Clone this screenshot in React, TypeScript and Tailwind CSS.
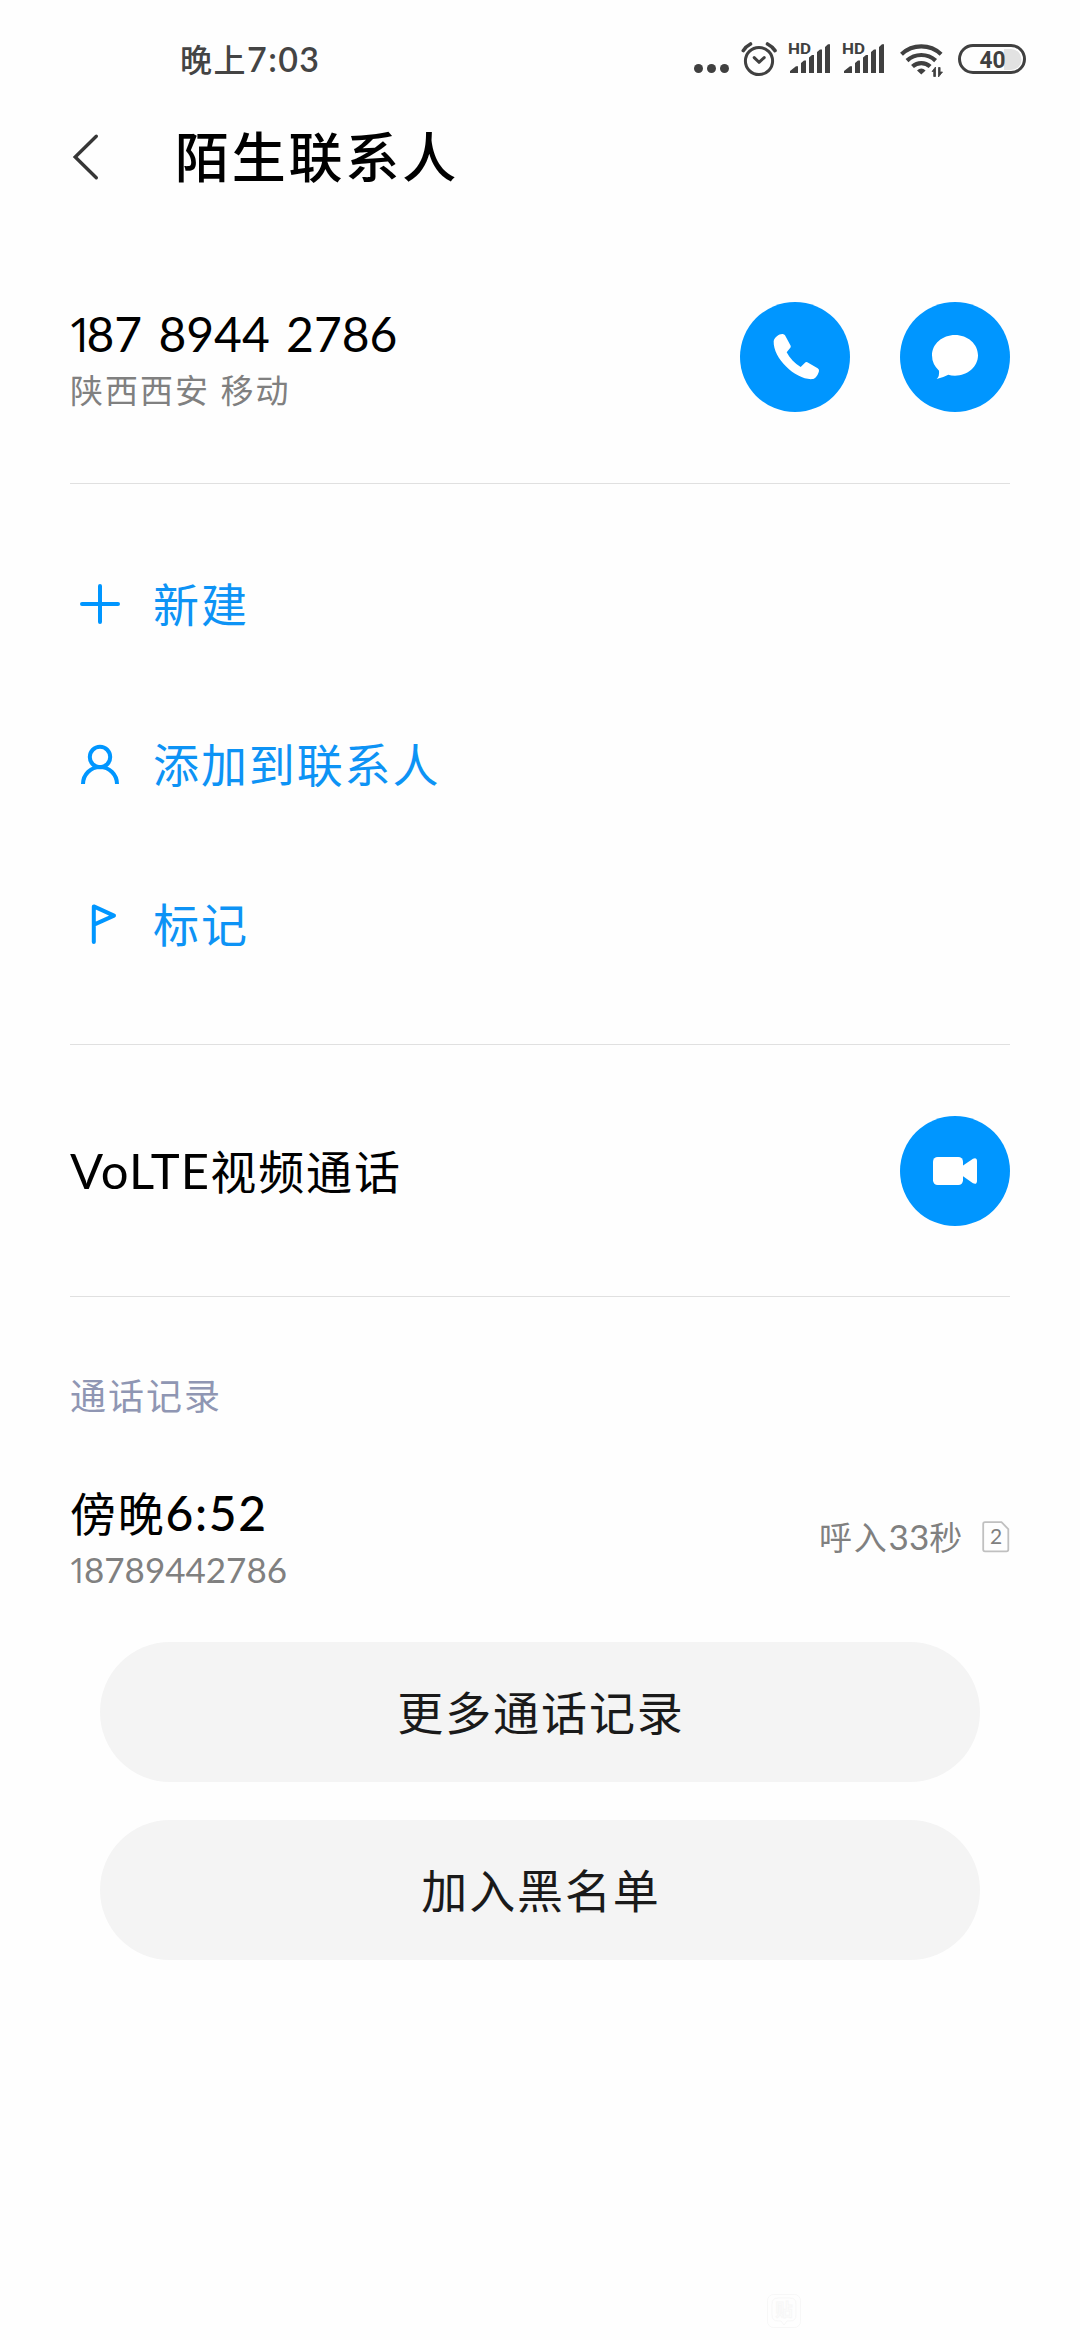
import type { ReactNode } from 'react';

const actions: { label: string; icon: ReactNode }[] = [
  { label: '新建', icon: <path d="M20 2v36M2 20h36" strokeLinecap="round" /> },
  {
    label: '添加到联系人',
    icon: (
      <>
        <circle cx="20" cy="13" r="10.2" />
        <path d="M3 40a17 17 0 0 1 34 0" />
      </>
    ),
  },
  {
    label: '标记',
    icon: <path d="M13.8 38V2.4L34 11.6 14 20.6" strokeLinecap="round" strokeLinejoin="round" />,
  },
];

export default function App() {
  return (
    <div className="flex h-[2340px] w-[1080px] flex-col overflow-hidden bg-[#fefefe] font-['Lato','Noto_Sans_CJK_SC',sans-serif] text-black whitespace-nowrap">
      <StatusBar />

      {/* Title bar */}
      <header className="flex h-[116px] items-center pl-[72px]">
        <svg className="mb-[3px] h-[48px] w-[28px]" viewBox="0 0 28 48" fill="none" stroke="#363636" strokeWidth="3.4" strokeLinecap="round">
          <path d="M24.3 3.3 3.2 24l21.1 20.7" />
        </svg>
        <h1 className="ml-[75px] text-[54px] leading-none font-medium tracking-[2.8px]">陌生联系人</h1>
      </header>

      <main className="flex flex-col px-[70px]">
        {/* Number */}
        <section className="flex h-[268px] items-center justify-between border-b border-[#e0e0e0] pt-[15px]">
          <div className="flex flex-col pt-[9px]">
            <span className="text-[48px] leading-[56px] [word-spacing:4px]">
              <span className="-ml-[3px] font-['Open_Sans'] tracking-[-8px]">1</span>87 8944 2786
            </span>
            <span className="text-[33px] leading-[56px] tracking-[2px] text-[#808080]">陕西西安 移动</span>
          </div>
          <div className="flex gap-[50px]">
            <RoundButton>
              <path d="M101 118C103 105 118 95 128 96Q133 97 135 100L152 131Q153 135 151 137L140 151C149 169 164 184 182 195L195 182Q198 179 202 181L233 199Q238 202 237 207C235 217 227 230 219 231C172 237 99 172 101 118Z" />
            </RoundButton>
            <RoundButton>
              <path d="M165 99C203 99 234 126 234 160S203 221 165 221Q153 221 145 218Q130 226 110 231Q119 222 117 206Q96 187 96 160C96 126 127 99 165 99Z" />
            </RoundButton>
          </div>
        </section>

        {/* Actions */}
        <section className="border-b border-[#e0e0e0] py-10">
          {actions.map(a => (
            <button key={a.label} className="flex h-40 w-full items-center pl-[10px] text-[#0d93f5]">
              <svg className="h-10 w-10" viewBox="0 0 40 40" fill="none" stroke="#0096ff" strokeWidth="4">
                {a.icon}
              </svg>
              <span className="ml-[33px] pt-[2px] text-[46px] leading-none tracking-[1.9px]">{a.label}</span>
            </button>
          ))}
        </section>

        {/* Video call */}
        <section className="flex h-[252px] items-center justify-between border-b border-[#e0e0e0]">
          <span className="text-[46px] leading-none tracking-[1.9px]">
            <span className="text-[49px] tracking-[1.2px]">VoLTE</span>视频通话
          </span>
          <RoundButton>
            <rect x="99" y="123" width="90" height="84" rx="14" />
            <path d="M187 150 219 128Q231 123 231 136V194Q231 207 219 202L187 179Z" />
          </RoundButton>
        </section>

        {/* Call log */}
        <h2 className="mt-[71px] text-[36px] leading-[56px] tracking-[2px] text-[#8f96b3]">通话记录</h2>
        <div className="mt-[55px] flex h-[120px] items-center justify-between">
          <div className="flex flex-col pt-[4px]">
            <span className="text-[46px] leading-[56px] tracking-[1.7px]">
              傍晚<span className="text-[48px] font-medium">6:52</span>
            </span>
            <span className="text-[35px] leading-[54px] text-[#808080]">
              <span className="-ml-[2px] font-['Open_Sans'] tracking-[-4px]">1</span>8789442786
            </span>
          </div>
          <div className="flex items-center pb-[5px] text-[#808080]">
            <span className="text-[33px] leading-none tracking-[1.8px]">
              呼入<span className="text-[35px] tracking-normal">33</span>秒
            </span>
            <svg className="ml-[18px] h-[32px] w-[28px]" viewBox="0 0 28 32" fill="none">
              <path d="M3 1.2H19.5L26.3 8V28.5Q26.3 30.3 24.5 30.3H3Q1.2 30.3 1.2 28.5V3Q1.2 1.2 3 1.2Z" stroke="#c0c0c0" strokeWidth="1.8" />
              <text x="14" y="23" textAnchor="middle" fontSize="21" fill="#808080" fontFamily="Lato, sans-serif">2</text>
            </svg>
          </div>
        </div>
      </main>

      <div className="mt-[43px] flex flex-col gap-[38px] px-[100px]">
        <PillButton>更多通话记录</PillButton>
        <PillButton>加入黑名单</PillButton>
      </div>

      {/* Faint app mark at the bottom edge */}
      <div className="mt-auto flex pb-[12px] pl-[767px]">
        <svg className="h-[34px] w-[34px]" viewBox="0 0 34 34" fill="none" stroke="#f7f7f7">
          <rect x="0.5" y="0.5" width="33" height="33" rx="6" />
          <path d="M11 4h12q6 0 6 6v11q0 6-6 6h-3l-3 4-3-4h-3q-6 0-6-6V10q0-6 6-6Z" />
          <text x="17" y="22" textAnchor="middle" fontSize="17" fontWeight="700" fill="#fefefe" fontFamily="Noto Sans CJK SC, sans-serif">贴</text>
        </svg>
      </div>
    </div>
  );
}

function StatusBar() {
  return (
    <div className="flex h-[100px] items-center justify-between pt-[20px] pr-[53px] pl-[180px] text-[#444444]">
      <span className="pb-[2px] text-[32px] leading-none font-medium tracking-[1.5px]">
        晚上<span className="text-[34px] font-semibold tracking-[1.4px]">7:03</span>
      </span>
      <svg className="h-[40px] w-[336px]" viewBox="0 0 336 40" fill="#404040">
        {/* more notifications */}
        <circle cx="7.5" cy="28.5" r="4.5" />
        <circle cx="20.5" cy="28.5" r="4.5" />
        <circle cx="33.5" cy="28.5" r="4.5" />
        {/* alarm */}
        <g fill="none" stroke="#404040" strokeWidth="3" strokeLinecap="round" strokeLinejoin="round">
          <circle cx="68" cy="21" r="13.6" />
          <path d="m63.2 17.6 4.8 4.7 5.2-4.7" />
          <path d="M52.3 10.6Q55 6.3 59.5 4M76.5 4Q81 6.3 84 10.6" strokeWidth="3.6" />
        </g>
        <Signal x={98} />
        <Signal x={152} />
        {/* wifi */}
        <g fill="none" stroke="#404040" strokeWidth="4.2">
          <path d="M210.5 14.2A29 29 0 0 1 250.1 14.2" />
          <path d="M216 20.6A21 21 0 0 1 244.6 20.6" />
          <path d="M221.5 26.5A13 13 0 0 1 239.1 26.5" />
        </g>
        <path d="M226 30.5Q230.3 26.5 234.6 30.5L230.3 34.5Z" />
        <path d="M244.5 27v9.5h-1.8V31.5H241ZM247.5 37V27.5h1.6V32h2.4Z" stroke="#404040" strokeWidth="0.8" />
        {/* battery */}
        <path d="M313 9H320A10 10 0 0 1 320 30H313Z" fill="#e2e2e2" />
        <rect x="268.5" y="5.5" width="65" height="27" rx="13.5" fill="none" stroke="#404040" strokeWidth="3" />
        <text x="301.5" y="27.5" textAnchor="middle" fontSize="24" fontWeight="700" textLength="26" lengthAdjust="spacingAndGlyphs" fontFamily="Roboto, sans-serif">40</text>
      </svg>
    </div>
  );
}

function Signal({ x }: { x: number }) {
  return (
    <g transform={`translate(${x} 0)`}>
      <text x="-1" y="13.8" fontSize="15.5" fontWeight="700" textLength="23" lengthAdjust="spacingAndGlyphs" fontFamily="Roboto, sans-serif">HD</text>
      <path d="M1 33V31L7 26.2H9V33ZM12 33V23L15 20.5H17V33ZM20 33V17.5L23 15H25V33ZM28 33V12L31 9.5H33V33ZM36 33V7L39 4.3H41V33Z" />
    </g>
  );
}

function RoundButton({ children }: { children: ReactNode }) {
  return (
    <button className="h-[110px] w-[110px] rounded-full bg-[#0096ff]">
      <svg className="h-full w-full" viewBox="0 0 330 330" fill="#fff">
        {children}
      </svg>
    </button>
  );
}

function PillButton({ children }: { children: ReactNode }) {
  return (
    <button className="flex h-[140px] items-center justify-center rounded-full bg-[#f4f4f4] pt-[2px] pl-[2px] text-[46px] leading-none tracking-[1.9px] text-[#1a1a1a]">
      {children}
    </button>
  );
}
